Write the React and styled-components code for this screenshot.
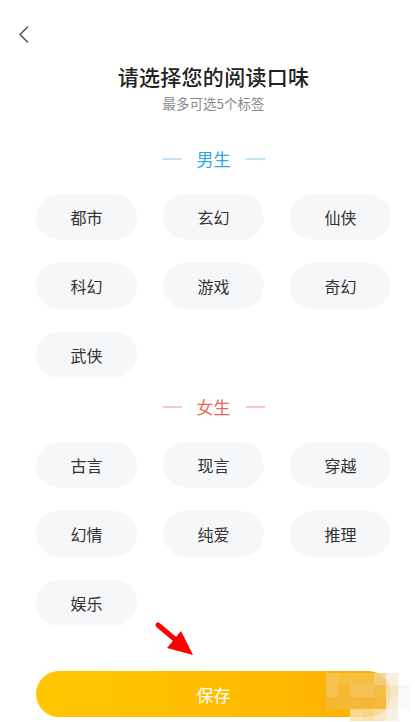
import React from 'react';
import styled, { createGlobalStyle } from 'styled-components';

const GlobalStyle = createGlobalStyle`
    html, body {
        margin: 0;
        padding: 0;
        background: #ffffff;
    }
    body {
        font-family: "Noto Sans CJK SC", "Noto Sans", sans-serif;
    }
`;

const maleTags = ['都市', '玄幻', '仙侠', '科幻', '游戏', '奇幻', '武侠'];
const femaleTags = ['古言', '现言', '穿越', '幻情', '纯爱', '推理', '娱乐'];

// mosaic watermark blocks in the bottom right corner
const mosaic = [
    [326, 673, '#f6c65e'], [338, 673, '#f7c24a'], [350, 673, '#f5c24c'], [362, 673, '#f3c251'], [374, 673, '#f1d08a'], [386, 673, '#f8ecd6'],
    [326, 685, '#f4c35c'], [338, 685, '#f4b93a'], [350, 685, '#f2c560'], [362, 685, '#f0c56a'], [374, 685, '#f2bf4f'], [386, 685, '#f3e2c0'], [398, 685, '#f9f7f4'],
    [326, 697, '#f3b940'], [338, 697, '#f3ba42'], [350, 697, '#f2ba45'], [362, 697, '#f2b944'], [374, 697, '#f3b946'], [386, 697, '#f4e7cf'], [398, 697, '#faf8f5'],
    [350, 709, '#fbe0a8'], [362, 709, '#f9dba0'], [374, 709, '#fae3b8'], [386, 709, '#f9efe0'],
];

function Section({ label, color, lineColor, tags }) {
    return (
        <>
            <SectionHead color={color} line={lineColor}>
                <span className="line" />
                <span>{label}</span>
                <span className="line" />
            </SectionHead>
            <TagGrid>
                {tags.map(t => (
                    <Tag key={t}>{t}</Tag>
                ))}
            </TagGrid>
        </>
    );
}

function App() {
    return (
        <Page>
            <GlobalStyle />
            <TopBar>
                <BackButton aria-label="back">
                    <svg width="11" height="17" viewBox="0 0 11 17" fill="none">
                        <path d="M9.5 1 L2 8.5 L9.5 16" stroke="#555" strokeWidth="1.6" strokeLinecap="round" strokeLinejoin="round" />
                    </svg>
                </BackButton>
            </TopBar>
            <Content>
                <Title>请选择您的阅读口味</Title>
                <Subtitle>最多可选5个标签</Subtitle>
                <Section label="男生" color="#2ea7e8" lineColor="#bfe3f7" tags={maleTags} />
                <Section label="女生" color="#f2605a" lineColor="#fbc9c5" tags={femaleTags} />
                <SaveButton>保存</SaveButton>
            </Content>

            <Arrow width="50" height="45" viewBox="0 0 50 45">
                <line x1="5" y1="5" x2="24" y2="21" stroke="#ff0000" strokeWidth="5" strokeLinecap="round" />
                <polygon points="28,11 14,28 40,35" fill="#ff0000" />
            </Arrow>

            {mosaic.map(([x, y, c], i) => (
                <Block key={i} style={{ left: x, top: y, background: c }} />
            ))}
        </Page>
    );
}

const Page = styled.div`
    position: relative;
    width: 415px;
    min-height: 722px;
    background: #ffffff;
    overflow: hidden;
`;

const TopBar = styled.div`
    height: 61px;
    padding: 26px 0 0 18px;
    box-sizing: border-box;
`;

const BackButton = styled.button`
    border: none;
    background: none;
    padding: 0;
    display: block;
    cursor: pointer;
`;

const Content = styled.div`
    display: flex;
    flex-direction: column;
    align-items: center;
    padding: 0 24px 0 36px;
`;

const Title = styled.h1`
    margin: 0;
    font-size: 21px;
    line-height: 30px;
    font-weight: 500;
    color: #222;
    letter-spacing: 0.3px;
`;

const Subtitle = styled.p`
    margin: 2px 0 0;
    font-size: 13.5px;
    line-height: 20px;
    color: #8a8a8a;
`;

const SectionHead = styled.div`
    display: flex;
    align-items: center;
    gap: 15px;
    margin-top: 34px;
    font-size: 17px;
    line-height: 24px;
    color: ${props => props.color};
    & + div + & {
        margin-top: 17px;
    }
    .line {
        width: 19px;
        height: 2px;
        background: ${props => props.line};
    }
`;

const TagGrid = styled.div`
    display: grid;
    grid-template-columns: repeat(3, 101px);
    column-gap: 26px;
    row-gap: 23px;
    margin-top: 23px;
    width: 355px;
`;

const Tag = styled.div`
    height: 46px;
    border-radius: 23px;
    background: #f6f7f9;
    display: flex;
    align-items: center;
    justify-content: center;
    font-size: 16px;
    color: #333;
`;

const SaveButton = styled.button`
    margin-top: 45px;
    width: 355px;
    height: 46px;
    border: none;
    border-radius: 23px;
    background: linear-gradient(90deg, #ffc700 0%, #ffbd00 50%, #ffae00 100%);
    color: #fff;
    font-family: inherit;
    font-size: 17px;
    cursor: pointer;
`;

const Arrow = styled.svg`
    position: absolute;
    left: 153px;
    top: 620px;
`;

const Block = styled.div`
    position: absolute;
    width: 12px;
    height: 12px;
    opacity: 0.85;
`;

export default App;
